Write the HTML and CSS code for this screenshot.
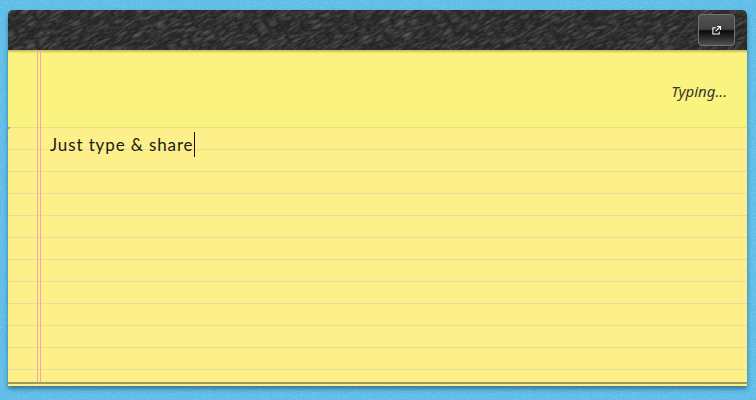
FILE: index.html
```html
<!DOCTYPE html>
<html lang="en">
<head>
<meta charset="utf-8">
<title>Just type &amp; share</title>
<link rel="stylesheet" href="styles.css">
</head>
<body>
<svg class="texture" aria-hidden="true">
  <filter id="cloth"><feTurbulence type="fractalNoise" baseFrequency="0.8" numOctaves="2" seed="3"/><feColorMatrix values="0 0 0 0 0.2  0 0 0 0 0.55  0 0 0 0 0.8  1.6 1.6 0 0 -1.3"/></filter>
  <rect width="100%" height="100%" filter="url(#cloth)"/>
</svg>
<main class="pad">
  <header class="bar">
    <svg class="texture" aria-hidden="true">
      <filter id="leather"><feTurbulence type="turbulence" baseFrequency="0.08 0.3" numOctaves="3" seed="8"/><feColorMatrix values="0 0 0 0 1  0 0 0 0 1  0 0 0 0 1  0.34 0 0 0 -0.03"/></filter>
      <g transform="rotate(-28 370 20)"><rect x="-100" y="-300" width="940" height="640" filter="url(#leather)"/></g>
    </svg>
    <button class="share" aria-label="Open">
      <svg viewBox="0 0 10 10" width="9" height="9" fill="none" stroke="#fff" stroke-width="1.2"><path d="M4 1.9H1v7h7V6"/><path d="M5.6.6h3.8v3.8M9.2.8 4 6"/></svg>
    </button>
  </header>
  <section class="sheet">
    <div class="top"><em class="status">Typing...</em></div>
    <div class="page"><p class="text">Just type &amp; share<span class="caret"></span></p></div>
    <div class="foot"></div>
    <div class="margin"></div>
  </section>
</main>
</body>
</html>
```
FILE: styles.css
```css
* { box-sizing: border-box; }
html, body { height: 100%; }
body {
  margin: 0;
  padding: 10px 9px 14px 8px;
  background: #58bde8;
  position: relative;
  overflow: hidden;
}
.texture { position: absolute; inset: 0; width: 100%; height: 100%; }
.pad {
  position: relative;
  height: 376px;
  display: flex;
  flex-direction: column;
  box-shadow: 0 3px 4px rgba(20, 60, 90, .55);
  border-radius: 5px 5px 0 0;
}
.bar {
  position: relative;
  flex: 0 0 40px;
  background: #222;
  border-radius: 5px 5px 0 0;
  overflow: hidden;
  display: flex;
  justify-content: flex-end;
  align-items: flex-start;
  padding: 4px 12px 0 0;
}
.share {
  position: relative;
  width: 37px;
  height: 32px;
  padding: 0;
  display: flex;
  align-items: center;
  justify-content: center;
  border: 1px solid #737373;
  border-radius: 4px;
  background: linear-gradient(#525252 0, #434343 47%, #0a0a0a 53%, #2a2a2a 75%, #505050 100%);
}
.sheet {
  position: relative;
  flex: 1;
  display: flex;
  flex-direction: column;
  background: #fbf380;
  box-shadow: inset 0 3px 2px -1px #c8bf5e;
}
.top {
  flex: 0 0 78px;
  display: flex;
  justify-content: flex-end;
  align-items: center;
  padding: 4px 20px 0 0;
}
.status {
  font: italic 15px "Noto Sans", sans-serif;
  color: #36362e;
}
.page {
  position: relative;
  flex: 1;
  box-shadow: 0 -1px 0 #e9e17c;
  background-color: #fdf08a;
  background-image: repeating-linear-gradient(#fdf08a 0, #fdf08a 21px, #e6df9c 21px, #e6df9c 22px);
  padding: 0 0 0 42px;
}
.page::before {
  content: "";
  position: absolute;
  left: 0;
  top: -1px;
  width: 3px;
  height: 3px;
  background: #58bde8;
  clip-path: polygon(0 0, 100% 0, 0 100%);
}
.text {
  margin: 0;
  height: 33px;
  font: 400 17px/33px Lato, sans-serif;
  letter-spacing: .88px;
  color: #1c1c15;
  display: flex;
  align-items: center;
}
.caret {
  width: 1px;
  height: 25px;
  margin: -1px 0 0 1px;
  background: #111;
}
.foot {
  flex: 0 0 4px;
  background: #fdf08a;
  border-top: 2px solid #9f9a5a;
}
.margin {
  position: absolute;
  top: 0;
  bottom: 4px;
  left: 29px;
  width: 4px;
  border-left: 1px solid #f4a6a8;
  border-right: 1px solid #f4a6a8;
}
```
